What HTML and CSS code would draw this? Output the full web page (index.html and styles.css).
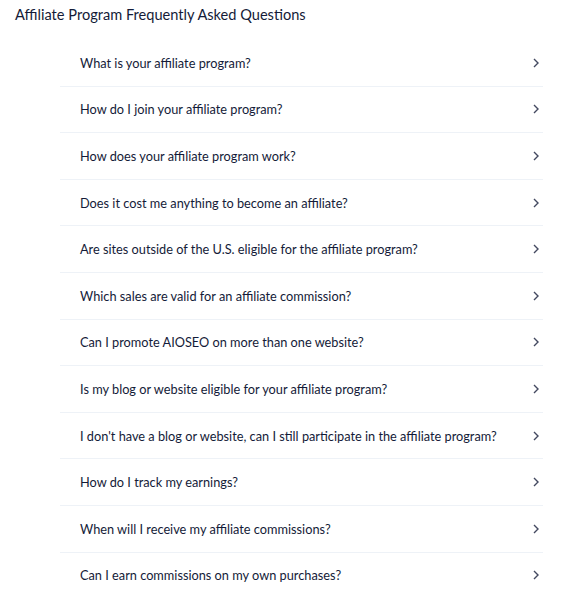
FILE: index.html
```html
<!DOCTYPE html>
<html>
<head>
<meta charset="utf-8">
<link rel="stylesheet" href="styles.css">
</head>
<body>
<h2 class="title">Affiliate Program Frequently Asked Questions</h2>
<div class="faq">
  <div class="row"><span>What is your affiliate program?</span><svg class="chev" viewBox="0 0 8 12"><path d="M2 2l4 4-4 4"/></svg></div>
  <div class="row"><span>How do I join your affiliate program?</span><svg class="chev" viewBox="0 0 8 12"><path d="M2 2l4 4-4 4"/></svg></div>
  <div class="row"><span>How does your affiliate program work?</span><svg class="chev" viewBox="0 0 8 12"><path d="M2 2l4 4-4 4"/></svg></div>
  <div class="row"><span>Does it cost me anything to become an affiliate?</span><svg class="chev" viewBox="0 0 8 12"><path d="M2 2l4 4-4 4"/></svg></div>
  <div class="row"><span>Are sites outside of the U.S. eligible for the affiliate program?</span><svg class="chev" viewBox="0 0 8 12"><path d="M2 2l4 4-4 4"/></svg></div>
  <div class="row"><span>Which sales are valid for an affiliate commission?</span><svg class="chev" viewBox="0 0 8 12"><path d="M2 2l4 4-4 4"/></svg></div>
  <div class="row"><span>Can I promote AIOSEO on more than one website?</span><svg class="chev" viewBox="0 0 8 12"><path d="M2 2l4 4-4 4"/></svg></div>
  <div class="row"><span>Is my blog or website eligible for your affiliate program?</span><svg class="chev" viewBox="0 0 8 12"><path d="M2 2l4 4-4 4"/></svg></div>
  <div class="row"><span>I don't have a blog or website, can I still participate in the affiliate program?</span><svg class="chev" viewBox="0 0 8 12"><path d="M2 2l4 4-4 4"/></svg></div>
  <div class="row"><span>How do I track my earnings?</span><svg class="chev" viewBox="0 0 8 12"><path d="M2 2l4 4-4 4"/></svg></div>
  <div class="row"><span>When will I receive my affiliate commissions?</span><svg class="chev" viewBox="0 0 8 12"><path d="M2 2l4 4-4 4"/></svg></div>
  <div class="row"><span>Can I earn commissions on my own purchases?</span><svg class="chev" viewBox="0 0 8 12"><path d="M2 2l4 4-4 4"/></svg></div>
</div>
</body>
</html>
```
FILE: styles.css
```css
html, body {
  margin: 0;
  padding: 0;
  background: #ffffff;
}
body {
  font-family: Lato, "Open Sans", sans-serif;
  color: #141b38;
}
.title {
  margin: 0;
  padding: 6px 0 0 15px;
  font-size: 14.6px;
  font-weight: 400;
  line-height: 18px;
  height: 39px;
  box-sizing: border-box;
}
.faq {
  margin-left: 60px;
  width: 483px;
}
.row {
  display: flex;
  align-items: center;
  justify-content: space-between;
  height: 46.6px;
  box-sizing: border-box;
  padding: 0 3px 0 20px;
  border-top: 1px solid #eef2f7;
  font-size: 12.75px;
}
.row:first-child {
  border-top: 1px solid transparent;
}
.chev {
  width: 8px;
  height: 12px;
  fill: none;
  stroke: #434960;
  stroke-width: 1.4;
}
```
